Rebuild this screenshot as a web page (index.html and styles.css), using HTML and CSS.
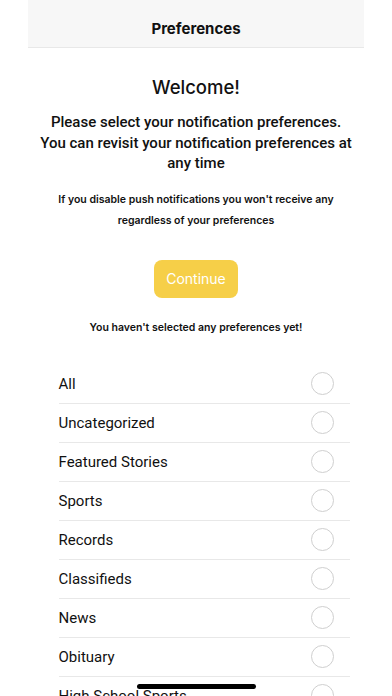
FILE: index.html
```html
<!DOCTYPE html>
<html>
<head>
<meta charset="utf-8">
<link rel="stylesheet" href="styles.css">
</head>
<body>
<div class="page">
  <header class="nav"><span class="nav-title">Preferences</span></header>
  <main class="content">
    <h1 class="welcome">Welcome!</h1>
    <p class="intro">Please select your notification preferences. You can revisit your notification preferences at any time</p>
    <p class="note">If you disable push notifications you won't receive any regardless of your preferences</p>
    <button class="continue">Continue</button>
    <p class="status">You haven't selected any preferences yet!</p>
    <ul class="list">
      <li class="row"><span>All</span><span class="radio"></span></li>
      <li class="row"><span>Uncategorized</span><span class="radio"></span></li>
      <li class="row"><span>Featured Stories</span><span class="radio"></span></li>
      <li class="row"><span>Sports</span><span class="radio"></span></li>
      <li class="row"><span>Records</span><span class="radio"></span></li>
      <li class="row"><span>Classifieds</span><span class="radio"></span></li>
      <li class="row"><span>News</span><span class="radio"></span></li>
      <li class="row"><span>Obituary</span><span class="radio"></span></li>
      <li class="row"><span>High School Sports</span><span class="radio"></span></li>
    </ul>
  </main>
  <div class="home-indicator"></div>
</div>
</body>
</html>
```
FILE: styles.css
```css
html, body {
  margin: 0;
  padding: 0;
  background: #ffffff;
  height: 696px;
  overflow: hidden;
}
body {
  font-family: Inter, "Liberation Sans", Arial, sans-serif;
  color: #111;
}
.page {
  width: 392px;
  height: 696px;
  position: relative;
  overflow: hidden;
}
.nav {
  margin: 0 28px;
  height: 47px;
  background: #f7f7f7;
  border-bottom: 1px solid #e8e8e8;
  display: flex;
  align-items: flex-end;
  justify-content: center;
}
.nav-title {
  font-size: 15px;
  font-weight: 700;
  line-height: 20px;
  margin-bottom: 8px;
}
.content {
  display: flex;
  flex-direction: column;
  align-items: center;
}
.welcome {
  margin: 27px 0 0;
  font-size: 18.5px;
  font-weight: 500;
  line-height: 24px;
}
.intro {
  margin: 13px 0 0;
  width: 312px;
  text-align: center;
  font-family: Roboto, "Liberation Sans", Arial, sans-serif;
  font-size: 15px;
  font-weight: 500;
  line-height: 20.5px;
}
.note {
  margin: 15px 0 0;
  width: 300px;
  text-align: center;
  font-size: 10.5px;
  font-weight: 600;
  line-height: 21px;
}
.continue {
  margin-top: 29px;
  width: 84px;
  height: 38px;
  border: none;
  border-radius: 8px;
  background: #f6cf48;
  color: #fff;
  font-family: inherit;
  font-size: 14px;
  font-weight: 400;
  padding: 0;
}
.status {
  margin: 21px 0 0;
  font-size: 10.5px;
  font-weight: 600;
  line-height: 18px;
}
.list {
  list-style: none;
  margin: 28px 0 0 16px;
  padding: 0;
  width: 291px;
}
.row {
  height: 38px;
  border-bottom: 1px solid #e8e8e8;
  display: flex;
  align-items: center;
  justify-content: space-between;
  font-family: Roboto, "Liberation Sans", Arial, sans-serif;
  font-size: 15px;
  line-height: 20px;
  padding-right: 16px;
}
.radio {
  width: 21px;
  height: 21px;
  border: 1px solid #cfcfcf;
  border-radius: 50%;
}
.home-indicator {
  position: absolute;
  left: 137px;
  top: 684px;
  width: 119px;
  height: 5px;
  border-radius: 3px;
  background: #000;
}
```
